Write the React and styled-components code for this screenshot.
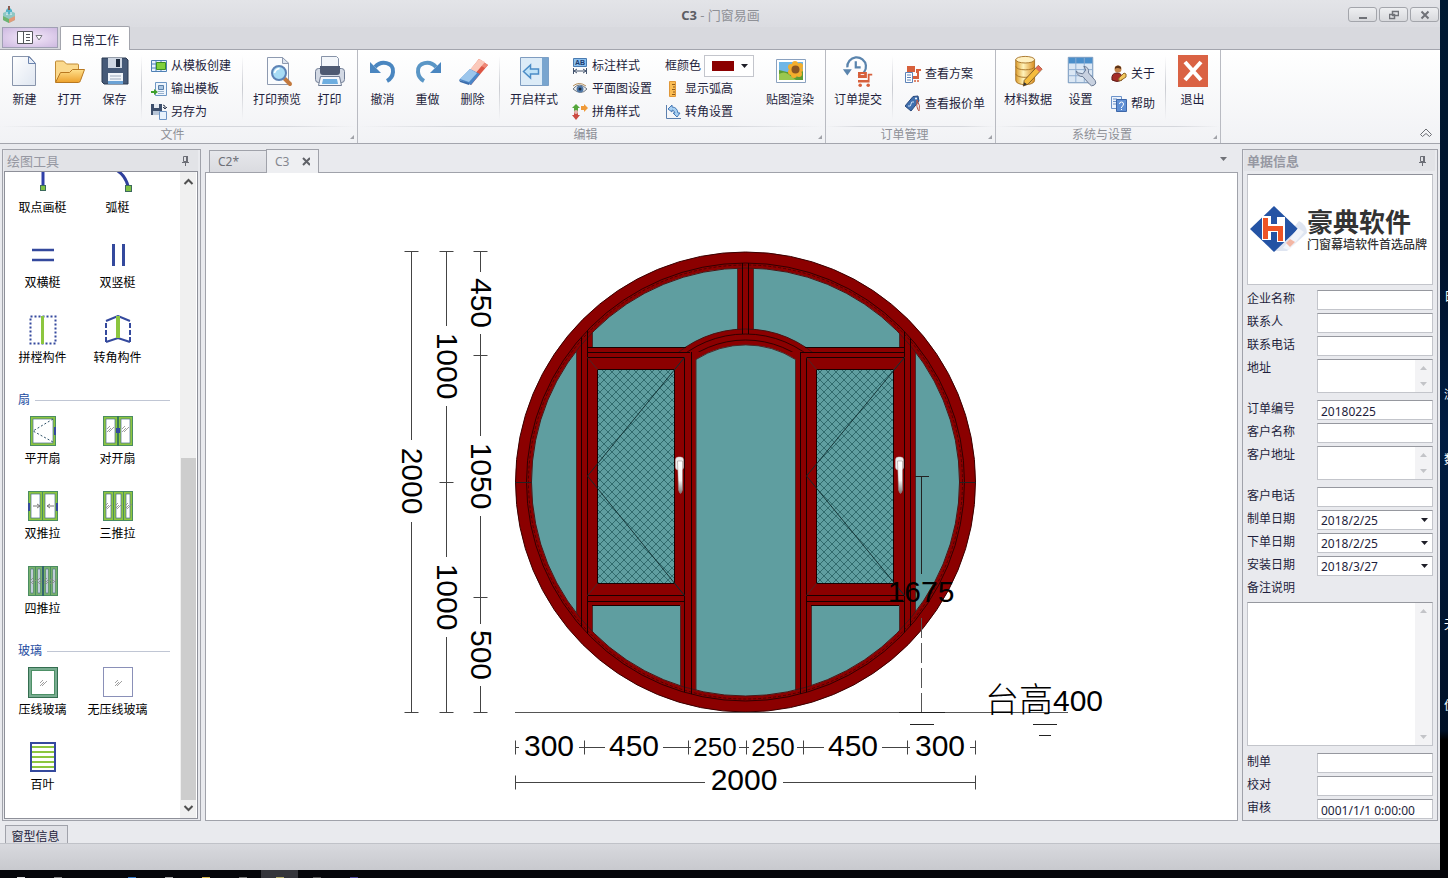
import { useState } from "react";
import styled, { createGlobalStyle } from "styled-components";

const GlobalStyle = createGlobalStyle`
    * {
        box-sizing:border-box;
    }

    body {
        margin:0;
        font-family:"Noto Sans", "Noto Sans CJK SC", sans-serif;
        font-size:12px;
        line-height:16px;
        color:#1e1e3c;
    }

    button, input, select, textarea {
        font:inherit;
        color:inherit;
        margin:0;
    }
`

/* ---------- ribbon icons, 32px ---------- */

const NewIcon = () => (
    <svg width="32" height="32" viewBox="0 0 32 32">
        <defs><linearGradient id="sheet" x1="0" y1="0" x2="1" y2="1"><stop offset="0" stopColor="#fff" /><stop offset="1" stopColor="#dfe6f1" /></linearGradient></defs>
        <path d="M3.500 1.500h17l6 7v22h-23z" fill="url(#sheet)" stroke="#8894ab" />
        <path d="M19.500 1.500v7h7z" fill="#e8eef8" stroke="#6c84ae" />
    </svg>
)

const OpenIcon = () => (
    <svg width="32" height="32" viewBox="0 0 32 32">
        <defs><linearGradient id="folder" x1="0" y1="0" x2="0" y2="1"><stop offset="0" stopColor="#ffe08c" /><stop offset="1" stopColor="#eda12c" /></linearGradient></defs>
        <path d="M1.500 27V7q0-1 1-1h7l3 3h11q1 0 1 1v6" fill="#fbd98d" stroke="#c08a35" />
        <path d="M1.500 27.500l5-10h9l3-3h12l-4 11q-.5 2-2 2z" fill="url(#folder)" stroke="#b87820" />
    </svg>
)

const SaveIcon = () => (
    <svg width="32" height="32" viewBox="0 0 32 32">
        <path d="M3 3h24l2 2v24H5l-2-2z" fill="#465a78" stroke="#2b3a52" />
        <path d="M9 3h14v10H9z" fill="#cfd7e3" />
        <path d="M17 4h4v8h-4z" fill="#1e2a3d" />
        <path d="M9 18h15v11H9z" fill="#f1f5fa" />
        <path d="M9 26h15v3H9z" fill="#6ba2d5" />
        <path d="M11 21h11M11 24h11" stroke="#9dabbd" />
    </svg>
)

const PreviewIcon = () => (
    <svg width="32" height="32" viewBox="0 0 32 32">
        <path d="M6.500 2.500h15l6 6v21h-21z" fill="#fafcfe" stroke="#8e9ab0" />
        <path d="M21.500 2.500v6h6.500z" fill="#dde5f0" stroke="#8e9ab0" />
        <path d="M24 24l5 5" stroke="#c3793e" strokeWidth="4" strokeLinecap="round" />
        <circle cx="18" cy="18" r="7" fill="#a8dcf5" stroke="#5d83b5" strokeWidth="2" />
        <path d="M13.500 18q1-4 5-4.500" stroke="#fff" strokeWidth="1.500" fill="none" />
    </svg>
)

const PrintIcon = () => (
    <svg width="32" height="32" viewBox="0 0 32 32">
        <path d="M7.500 1.500h15l2 2v11h-17z" fill="#f3f6fa" stroke="#8793a8" />
        <rect x="1.500" y="13.500" width="29" height="14" rx="3" fill="#d3d9e4" stroke="#707d95" />
        <path d="M6 11h20v6q0 3-3 3H9q-3 0-3-3z" fill="#4e5a72" />
        <path d="M6.500 21.500h19l2 9h-23z" fill="#f5f8fc" stroke="#707d95" />
        <path d="M9 24h14l1 5H8z" fill="#6eaee0" />
    </svg>
)

const UndoIcon = () => (
    <svg width="32" height="32" viewBox="0 0 32 32">
        <path d="M8 12C14 5 27 7 26 17q-.5 6-6 9" fill="none" stroke="#4a86c0" strokeWidth="4" />
        <path d="M3 7v11h11z" fill="#4a86c0" />
    </svg>
)

const RedoIcon = () => (
    <svg width="32" height="32" viewBox="0 0 32 32">
        <path d="M24 12C18 5 5 7 6 17q.5 6 6 9" fill="none" stroke="#5a96c6" strokeWidth="4" />
        <path d="M29 7v11H18z" fill="#4a86c0" />
    </svg>
)

const EraserIcon = () => (
    <svg width="32" height="32" viewBox="0 0 32 32">
        <path d="M22 4l9 6L14 30l-9-5z" fill="#dd5544" />
        <path d="M22 4l9 6-3 3-9-5z" fill="#ee8876" />
        <path d="M22 4l6 3-11 13-6-3z" fill="#fbc9bb" />
        <path d="M13 14l10 5-9 11-9-4-3-1z" fill="#4b86c8" />
        <path d="M13 14l7 4-8 9-9-3z" fill="#9cc6ec" />
        <path d="M2 25l10 3v2l-9-3z" fill="#3b6cab" />
    </svg>
)

const OpenStyleIcon = () => (
    <svg width="32" height="32" viewBox="0 0 32 32">
        <path d="M2.500 2.500h28v28h-28z" fill="#dcebf7" stroke="#7f9cc0" />
        <path d="M24 2.500h6.500v28H24z" fill="#79a5cf" />
        <path d="M5.500 16.500l7-6.500v4h8v5h-8v4z" fill="#bfe2f8" stroke="#4b8cc6" strokeWidth="1.500" />
    </svg>
)

const PictureIcon = () => (
    <svg width="32" height="32" viewBox="0 0 32 32">
        <path d="M2.500 4.500h29v23h-29z" fill="#fff" stroke="#8aa1bf" />
        <path d="M5 7h24v18H5z" fill="#6fb6e6" />
        <path d="M5 15l8 2 16-1v9H5z" fill="#5c9c35" />
        <path d="M5 19q5-3 9 0t8 6H5z" fill="#9ac74e" />
        <g fill="#f3ae2c">
            <circle cx="21" cy="9" r="3" /><circle cx="26" cy="11" r="3" /><circle cx="27" cy="15" r="2" /><circle cx="25" cy="19" r="3" />
            <circle cx="20" cy="20" r="3" /><circle cx="17" cy="17" r="3" /><circle cx="17" cy="12" r="3" />
        </g>
        <circle cx="21.500" cy="14.500" r="4" fill="#8a5522" />
    </svg>
)

const OrderIcon = () => (
    <svg width="34" height="36" viewBox="0 0 34 36">
        <path d="M5 14A10.500 10.500 0 1 1 17 23.500" fill="none" stroke="#5a84ad" strokeWidth="2.500" />
        <path d="M0 16h10l-5 7z" fill="#5a84ad" />
        <path d="M14.500 7v7H20" fill="none" stroke="#5a84ad" strokeWidth="2.500" />
        <path d="M17 19h10v7H17zM28 21h5v2h-3v8H17v-3h11z" fill="#d7603c" />
        <path d="M20 22h4" stroke="#fff" />
        <circle cx="19.500" cy="34" r="2" fill="#d7603c" /><circle cx="28.500" cy="34" r="2" fill="#d7603c" />
    </svg>
)

const MaterialIcon = () => (
    <svg width="32" height="34" viewBox="0 0 32 34">
        <defs><linearGradient id="gold"><stop offset="0" stopColor="#dc9c2c" /><stop offset=".4" stopColor="#fff3bb" /><stop offset="1" stopColor="#d98d1f" /></linearGradient></defs>
        <path d="M3 5v22c0 6 20 6 20 0V5z" fill="url(#gold)" stroke="#a8752a" />
        <ellipse cx="13" cy="5" rx="10" ry="3.500" fill="#fff0c0" stroke="#a8752a" />
        <path d="M3 12c0 5 20 5 20 0M3 20c0 5 20 5 20 0" fill="none" stroke="#a8752a" />
        <path d="M27 11l4 4-15 16-5 2 1-6z" fill="#f6bc3d" stroke="#7d5a26" />
        <path d="M27 11l4 4-3 3-4-4z" fill="#e06a5a" />
        <path d="M12 29l-1 4 4-2z" fill="#333" />
    </svg>
)

const SettingsIcon = () => (
    <svg width="32" height="34" viewBox="0 0 32 34">
        <path d="M2.500 2.500h26v27h-26z" fill="#dbe7f4" stroke="#6c8fb8" />
        <path d="M3 3h25v6H3z" fill="#4b8fcb" />
        <path d="M3 15.500h25M3 22h25M10.500 3v26M19.500 3v26" stroke="#8dacd0" />
        <path d="M11 17q1 6 7 6l7 8q2 3 5 1t1-5l-7-8q1-6-5-7l2 4-3 4-5-1z" fill="#c8d1e0" stroke="#64748f" />
    </svg>
)

const ExitIcon = () => (
    <svg width="32" height="32" viewBox="0 0 32 32">
        <path d="M1 0h30v32H1z" fill="#da6244" />
        <path d="M8 7l16 18M24 7L8 25" stroke="#fff" strokeWidth="4" />
    </svg>
)

/* ---------- ribbon icons, 16px ---------- */

const TemplateIcon = () => (
    <svg width="16" height="16" viewBox="0 0 16 16">
        <path d="M.5 2.500h15v11H.5z" fill="#e9f3ff" stroke="#4e80b5" />
        <path d="M0 6h16M0 10h16M5 2v12M10 2v12" stroke="#4e80b5" />
        <path d="M5.500 4.500h9v7h-9z" fill="#7fd03c" stroke="#3b8e22" />
    </svg>
)

const ExportIcon = () => (
    <svg width="16" height="16" viewBox="0 0 16 16">
        <path d="M4.500 1.500h11v13h-11z" fill="#eef5fd" stroke="#6e97c4" />
        <path d="M7.500 4.500h5v4h-5z" fill="#a9c5e2" stroke="#5a7fa8" /><path d="M7 10.500h6M7 12.500h6" stroke="#9ab2cd" />
        <path d="M0 10h3V8l4 3-4 3v-2H0z" fill="#3fa02b" />
    </svg>
)

const SaveAsIcon = () => (
    <svg width="16" height="16" viewBox="0 0 16 16">
        <path d="M0 0h11v11H0z" fill="#3d4f6c" /><path d="M3 0h5v4H3z" fill="#e6ebf2" /><path d="M2 7h7v4H2z" fill="#b8c6d8" />
        <path d="M12 1q3 0 2 4m-2-2l2 2 2-2" stroke="#333e55" fill="none" />
        <path d="M8.500 7.500h7v8h-7z" fill="#e8f2fc" stroke="#6d94c4" />
    </svg>
)

const LabelStyleIcon = () => (
    <svg width="16" height="16" viewBox="0 0 16 16">
        <path d="M1.500.5h13v8h-13z" fill="#8cc0ee" stroke="#4a7ab0" />
        <text x="3" y="7" fontSize="7" fontWeight="700" fill="#1c3d70" fontFamily="Liberation Sans, sans-serif">AB</text>
        <path d="M1.500 10v6M14.500 10v6M2 13h12M5 11l-3 2 3 2M11 11l3 2-3 2" stroke="#44546e" fill="none" />
    </svg>
)

const EyeIcon = () => (
    <svg width="16" height="16" viewBox="0 0 16 16">
        <path d="M1 8q6-8 14 0-6 7-14 0z" fill="#e9edf1" stroke="#707780" />
        <circle cx="8" cy="8" r="3.500" fill="#4e77a8" /><circle cx="8" cy="8" r="1.500" fill="#1c2a3c" />
        <path d="M1 5q6-5 13 0" stroke="#b18a55" fill="none" />
    </svg>
)

const JointIcon = () => (
    <svg width="16" height="16" viewBox="0 0 16 16">
        <path d="M4 0l4 4H6v4H2V4H0z" fill="#54a63a" />
        <path d="M9 2h3V0l4 4-4 4V6H9z" fill="#ef9a39" />
        <path d="M2 8h4v3h2l-4 5-4-5h2z" fill="#cc4a41" />
        <circle cx="4" cy="8" r="2" fill="#e6b4ae" />
    </svg>
)

const RulerIcon = () => (
    <svg width="16" height="16" viewBox="0 0 16 16">
        <path d="M4.500.5h6v15h-6z" fill="#fbbd53" stroke="#e0983a" />
        <path d="M7 3.500h3M8 6h2M7 8.500h3M8 11h2M7 13.500h3" stroke="#8f5a1b" />
    </svg>
)

const CornerIcon = () => (
    <svg width="16" height="16" viewBox="0 0 16 16">
        <path d="M1.500 1v13.500H16" stroke="#5b7fae" fill="none" />
        <path d="M3 5l4-4v2q5 0 6 6h2l-3 4-4-4h2q-1-3-3-3v2z" fill="#a8d0f2" stroke="#4679b6" />
    </svg>
)

const PlanIcon = () => (
    <svg width="16" height="18" viewBox="0 0 16 18">
        <path d="M2 1h8v6H2zM11 4h5v2h-2v8H8v-3h4V8h-1z" fill="#d7603c" />
        <circle cx="10" cy="16" r="1" fill="#d7603c" /><circle cx="13" cy="16" r="1" fill="#d7603c" />
        <path d="M.5 7.500h7v10h-7z" fill="#fff" stroke="#5d83b8" /><path d="M2 10h4M2 12.500h4M2 15h4" stroke="#5d83b8" />
    </svg>
)

const QuoteIcon = () => (
    <svg width="16" height="18" viewBox="0 0 16 18">
        <path d="M8 1.500l5-.5 1 5-8 10-6-5z" fill="#3f6fae" stroke="#29497c" />
        <circle cx="11" cy="3.500" r="1" fill="#fff" />
        <path d="M9 7q-3-1-3 2t-3 2" stroke="#cfe0f5" fill="none" />
        <path d="M12 5q4 6 2 11-3-3-2-11" stroke="#b85a4a" fill="none" />
    </svg>
)

const AboutIcon = () => (
    <svg width="16" height="18" viewBox="0 0 16 18">
        <circle cx="7" cy="4" r="3.500" fill="#c5854a" /><path d="M4 2q3-3 6 0v2Q6 2 4 4z" fill="#5d3317" />
        <path d="M1 15q-1-7 5-7 6 0 5 7-5 3-10 0z" fill="#a52c26" stroke="#5e1b18" />
        <path d="M9 16l6-4q1-4-2-4l-5 5q-1 3 1 3z" fill="#f3c65b" stroke="#8d682a" />
    </svg>
)

const HelpIcon = () => (
    <svg width="16" height="18" viewBox="0 0 16 18">
        <path d="M.5 1.500h10v12H.5z" fill="#edf3fc" stroke="#6d93ca" /><path d="M2 4h4M2 6.500h3M2 9h3" stroke="#6d93ca" />
        <path d="M5.500 4.500h10v12h-10z" fill="#5f8fd4" stroke="#3d66a8" />
        <path d="M8.500 9q0-2 2-2t2 2-2 3v1m0 1v1" stroke="#fff" fill="none" />
    </svg>
)

const CollapseIcon = () => (
    <svg width="14" height="10" viewBox="0 0 14 10">
        <path d="M1.500 6.500L7 1l5.500 5.500-2 2L7 5.500l-3.500 3z" fill="none" stroke="#6c6e74" />
    </svg>
)

const PinIcon = () => (
    <svg width="8" height="10" viewBox="0 0 8 10">
        <path d="M1.500.5h4v5h-4zM0 6.500h7M3.500 6v4" fill="none" stroke="#6c6e76" /><path d="M4 0h2v6H4z" fill="#6c6e76" />
    </svg>
)

const Arrow = ({ color = "#1e1e28", up = false }) => (
    <svg width="7" height="4" viewBox="0 0 7 4"><path d={up ? "M0 4h7L3.500 0z" : "M0 0h7L3.500 4z"} fill={color} /></svg>
)

/* ---------- tool box icons, 30px ---------- */

const Glint = ({ x, y }) => <path d={`M${x - 3} ${y + 3}l4-4M${x - 1} ${y + 3}l5-5M${x} ${y - 3}l-3 3`} stroke="#888" strokeWidth=".8" />

const Sash = ({ x, y, w, h, tone = "#8cc63f" }) => (
    <>
        <rect x={x + 1.5} y={y + 1.5} width={w - 3} height={h - 3} fill="#fff" stroke={tone} strokeWidth="3" />
        <rect x={x + 0.5} y={y + 0.5} width={w - 1} height={h - 1} fill="none" stroke="#4a8c62" />
        <rect x={x + 3} y={y + 3} width={w - 6} height={h - 6} fill="none" stroke="#4b6e93" strokeWidth=".7" />
    </>
)

const toolArt = {
    point: <><path d="M15 0v21" stroke="#2f3fa8" strokeWidth="3" /><rect x="12.500" y="20.500" width="5" height="5" fill="#7ec043" stroke="#3c6a5c" /></>,
    arc: <><path d="M6 2Q21 6 25 21" fill="none" stroke="#2f3f9c" strokeWidth="3" /><rect x="22.500" y="20.500" width="6" height="6" fill="#7ec043" stroke="#3c6a5c" /></>,
    horizontal: <path d="M4 10h22M4 20h22" stroke="#34499d" strokeWidth="2.500" />,
    vertical: <path d="M10.500 4v22M20.500 4v22" stroke="#34499d" strokeWidth="3" />,
    join: <><path d="M2.500 1.500h25v27h-25z" fill="none" stroke="#34499d" strokeWidth="2" strokeDasharray="2 2" /><path d="M14.500 1v28" stroke="#8cc63f" strokeWidth="3" /></>,
    corner: <><path d="M3 27V6M27 27V6" stroke="#34499d" strokeWidth="2" strokeDasharray="5 2" /><path d="M3 6l12-5 12 5M3 27l12-4 12 4" fill="none" stroke="#34499d" strokeWidth="2" /><path d="M15 1v22" stroke="#8cc63f" strokeWidth="4" /></>,
    casement: <><Sash x={2} y={0} w={26} h={30} /><path d="M25 3L5 15l20 11" fill="none" stroke="#2c5068" strokeDasharray="2 2" /><path d="M27 11v8" stroke="#34499d" strokeWidth="2" /></>,
    pair: <><Sash x={0} y={0} w={15} h={30} /><Sash x={15} y={0} w={15} h={30} /><Glint x={7} y={13} /><Glint x={22} y={13} /><path d="M15 0v30" stroke="#3a7a59" strokeWidth="2" /><path d="M15 12v5" stroke="#34499d" strokeWidth="4" /></>,
    slide2: <><Sash x={0} y={0} w={15} h={30} /><Sash x={14} y={0} w={16} h={30} /><path d="M5 15h7m-3-2l3 2-3 2M26 15h-7m3-2l-3 2 3 2" stroke="#777" fill="none" /><path d="M1 12v8M29 12v8" stroke="#34499d" strokeWidth="2" /></>,
    slide3: <><Sash x={0} y={0} w={11} h={30} /><Sash x={10} y={0} w={11} h={30} /><Sash x={20} y={0} w={10} h={30} /><Glint x={5} y={15} /><Glint x={15} y={15} /><Glint x={25} y={15} /></>,
    slide4: <><Sash x={0} y={0} w={8} h={30} tone="#77b06b" /><Sash x={7} y={0} w={8} h={30} tone="#77b06b" /><Sash x={15} y={0} w={8} h={30} tone="#77b06b" /><Sash x={22} y={0} w={8} h={30} tone="#77b06b" /><Glint x={5} y={15} /><Glint x={12} y={15} /><Glint x={19} y={15} /><Glint x={25} y={15} /><path d="M15 0v30" stroke="#33656f" strokeWidth="2" /></>,
    beadGlass: <><rect x="1.500" y="1.500" width="27" height="28" fill="#fff" stroke="#78ac90" strokeWidth="3" /><rect x=".5" y=".5" width="29" height="30" fill="none" stroke="#346d50" /><rect x="3.500" y="3.500" width="23" height="24" fill="none" stroke="#4d9066" /><Glint x={15} y={16} /></>,
    plainGlass: <><rect x=".5" y=".5" width="29" height="29" fill="#fff" stroke="#8a90b8" /><Glint x={15} y={16} /></>,
    louver: <><rect x="3" y="1" width="24" height="28" fill="#fff" stroke="#34499d" strokeWidth="2" /><path d="M4 5h22M4 10h22M4 15h22M4 20h22M4 25h22" stroke="#8cc63f" strokeWidth="2" /></>,
}

const toolGroups = [
    { title: "", tools: [["取点画梃", "point"], ["弧梃", "arc"], ["双横梃", "horizontal"], ["双竖梃", "vertical"], ["拼樘构件", "join"], ["转角构件", "corner"]] },
    { title: "扇", tools: [["平开扇", "casement"], ["对开扇", "pair"], ["双推拉", "slide2"], ["三推拉", "slide3"], ["四推拉", "slide4"]] },
    { title: "玻璃", tools: [["压线玻璃", "beadGlass"], ["无压线玻璃", "plainGlass"], ["百叶", "louver"]] },
]

/* ---------- ribbon ---------- */

const Big = ({ icon, label, wide }) => <BigButton type="button" $wide={wide}>{icon}<span>{label}</span></BigButton>
const Small = ({ icon, label, tall }) => <SmallButton type="button" $tall={tall}>{icon}{label}</SmallButton>

const Group = ({ title, children }) => (
    <GroupBox>
        <GroupBody>{children}</GroupBody>
        <GroupTitle>{title}<Corner /></GroupTitle>
    </GroupBox>
)

const Ribbon = () => (
    <RibbonBar>
        <Group title="文件">
            <Big icon={<NewIcon />} label="新建" />
            <Big icon={<OpenIcon />} label="打开" />
            <Big icon={<SaveIcon />} label="保存" />
            <Divider />
            <Column $width={92}>
                <Small icon={<TemplateIcon />} label="从模板创建" />
                <Small icon={<ExportIcon />} label="输出模板" />
                <Small icon={<SaveAsIcon />} label="另存为" />
            </Column>
            <Divider />
            <Big wide icon={<PreviewIcon />} label="打印预览" />
            <Big icon={<PrintIcon />} label="打印" />
        </Group>
        <Group title="编辑">
            <Big icon={<UndoIcon />} label="撤消" />
            <Big icon={<RedoIcon />} label="重做" />
            <Big icon={<EraserIcon />} label="删除" />
            <Divider />
            <Big wide icon={<OpenStyleIcon />} label="开启样式" />
            <Column $width={96} $inset>
                <Small icon={<LabelStyleIcon />} label="标注样式" />
                <Small icon={<EyeIcon />} label="平面图设置" />
                <Small icon={<JointIcon />} label="拼角样式" />
            </Column>
            <Column $width={100}>
                <ColorField>
                    <label htmlFor="frame-color">框颜色</label>
                    <ColorBox>
                        <select id="frame-color" defaultValue="#8b0000"><option value="#8b0000"></option></select>
                        <Swatch />
                        <Arrow />
                    </ColorBox>
                </ColorField>
                <Small icon={<RulerIcon />} label="显示弧高" />
                <Small icon={<CornerIcon />} label="转角设置" />
            </Column>
            <Big wide icon={<PictureIcon />} label="贴图渲染" />
        </Group>
        <Group title="订单管理">
            <Big wide icon={<OrderIcon />} label="订单提交" />
            <Divider />
            <Column $width={93} $inset>
                <Small tall icon={<PlanIcon />} label="查看方案" />
                <Small tall icon={<QuoteIcon />} label="查看报价单" />
            </Column>
        </Group>
        <Group title="系统与设置">
            <Big wide icon={<MaterialIcon />} label="材料数据" />
            <Big icon={<SettingsIcon />} label="设置" />
            <Column $width={58} $inset>
                <Small tall icon={<AboutIcon />} label="关于" />
                <Small tall icon={<HelpIcon />} label="帮助" />
            </Column>
            <Divider />
            <Big icon={<ExitIcon />} label="退出" />
        </Group>
        <Collapse type="button" aria-label="收起"><CollapseIcon /></Collapse>
    </RibbonBar>
)

/* ---------- drawing ---------- */

const VDim = ({ x, marks, labels }) => (
    <g>
        {marks.map((m) => <path key={m} d={`M${x - 7} ${m}h14`} />)}
        {labels.map(([text, mid, half], i) => (
            <g key={mid}>
                <path d={`M${x} ${marks[i]}V${mid - half}M${x} ${mid + half}V${marks[i + 1]}`} />
                <DimText transform={`translate(${x - 10} ${mid}) rotate(90)`} textAnchor="middle">{text}</DimText>
            </g>
        ))}
    </g>
)

const HDim = ({ y, base, marks, labels }) => (
    <g>
        {marks.map((m) => <path key={m} d={`M${m} ${y - 7}v14`} />)}
        {labels.map(([text, mid, half, small], i) => (
            <g key={mid}>
                <path d={`M${marks[i]} ${y}H${mid - half}M${mid + half} ${y}H${marks[i + 1]}`} />
                <DimText x={mid} y={base} $small={small} textAnchor="middle">{text}</DimText>
            </g>
        ))}
    </g>
)

const Leaf = ({ x, right, gl, gr }) => (
    <g>
        <path d={`M${x} 357.500H${right}V595.500H${x}z`} fill="#8b0000" stroke="#1a0000" />
        <path d={`M${gl} 369.500H${gr}V583.500H${gl}z`} fill="#5f9ea0" />
        <path d={`M${gl} 369.500H${gr}V583.500H${gl}z`} fill="url(#mesh)" stroke="#1a0000" />
        <path d={`M${x} 357.500L${gl} 369.500M${right} 357.500L${gr} 369.500M${x} 595.500L${gl} 583.500M${right} 595.500L${gr} 583.500`} stroke="#4d2525" />
        <path d={`M${right} 357.500L${x} 476L${right} 595.500`} fill="none" stroke="#0e2c2f" strokeWidth=".9" />
        <rect x={right - 9} y="457" width="8" height="13" rx="3" fill="#eee" stroke="#bbb" strokeWidth=".5" />
        <path d={`M${right - 7} 461h5v29q-2 7-4 0z`} fill="url(#lever)" stroke="#9a8080" strokeWidth=".5" />
    </g>
)

const Drawing = () => (
    <Sheet viewBox="206 173 1031 647" role="img" aria-label="C3">
        <defs>
            <pattern id="mesh" width="8" height="8" patternUnits="userSpaceOnUse">
                <path d="M0 0l8 8M8 0L0 8" stroke="#1d5458" strokeWidth=".7" />
            </pattern>
            <linearGradient id="lever" x1="0" y1="0" x2="0" y2="1"><stop offset="0" stopColor="#fff" /><stop offset=".6" stopColor="#f4f4f4" /><stop offset="1" stopColor="#777" /></linearGradient>
            <clipPath id="glassClip"><circle cx="745.500" cy="482" r="214" /></clipPath>
            <clipPath id="frameClip"><circle cx="745.500" cy="482" r="219" /></clipPath>
            <clipPath id="archClip"><path d="M600 300h290v52H600z" /></clipPath>
        </defs>
        <circle cx="745.500" cy="482" r="230" fill="#8b0000" stroke="#3a0000" />
        <g clipPath="url(#glassClip)" fill="#5f9ea0" stroke="#4a2a2a">
            <path d="M592.500 240H737.500V347.500H592.500zM753.500 240H899.500V347.500H753.500z" />
            <path d="M500 240H576.500V720H500zM915.500 240H990V720H915.500z" />
            <path d="M592.500 605.500H680.500V720H592.500zM811.500 605.500H899.500V720H811.500z" />
        </g>
        <g clipPath="url(#archClip)" fill="#8b0000" stroke="#4a1010">
            <circle cx="745.500" cy="437" r="108" />
            <g stroke="#1a0000" strokeWidth=".8"><circle cx="745.500" cy="437" r="103" /><circle cx="745.500" cy="437" r="97" /></g>
        </g>
        <path d="M696 720V359.500A92 92 0 0 1 795.500 359.500V720z" clipPath="url(#glassClip)" fill="#5f9ea0" stroke="#4a2a2a" />
        <circle cx="745.500" cy="482" r="214" fill="none" stroke="#4a1515" />
        <circle cx="745.500" cy="482" r="219" fill="none" stroke="#1a0000" strokeWidth=".8" />
        <circle cx="745.500" cy="482" r="217" fill="none" stroke="#3d0000" strokeDasharray="3 2" strokeWidth=".8" />
        <g clipPath="url(#frameClip)" fill="none" stroke="#1a0000">
            <path d="M581.500 250V720M587.500 250V720M904.500 250V720M910.500 250V720" />
            <path d="M742.500 250V334M748.500 250V334" />
            <path d="M684.500 357V720M691.500 352V720M800.500 352V720M806.500 357V720" />
            <path d="M587 347.500H686M805 347.500H904M587 352.500H690M801 352.500H904" />
            <path d="M587 601.500H684M806 601.500H904M592 605.500H680M811 605.500H899" />
        </g>
        <Leaf x={587.5} right={684.5} gl={597.5} gr={674.5} />
        <Leaf x={806.5} right={904.5} gl={816.5} gr={893.5} />
        <g stroke="#222" fill="none">
            <path d="M515 482.500h16M960 482.500h16" />
            <path d="M515 712.500H1068" stroke="#555" />
            <path d="M899 712.500h46M910 724.500h24M1033 724.500h24M1039 735.500h12" />
            <path d="M915 476.500h14M921.500 477V574" />
            <path d="M921.500 618V712" stroke="#555" strokeDasharray="20 5" />
        </g>
        <g stroke="#444" fill="none">
            <VDim x={411.5} marks={[251.5, 712.5]} labels={[["2000", 481, 41]]} />
            <VDim x={446.5} marks={[251.5, 482.5, 712.5]} labels={[["1000", 366, 40], ["1000", 597, 40]]} />
            <VDim x={480.5} marks={[251.5, 355.5, 597.5, 712.5]} labels={[["450", 303, 31], ["1050", 476, 40], ["500", 655, 31]]} />
            <HDim
                y={747.5}
                base={756}
                marks={[515.5, 584.5, 688.5, 746.5, 803.5, 907.5, 975.5]}
                labels={[["300", 549, 30], ["450", 634, 29], ["250", 715, 24, true], ["250", 773, 24, true], ["450", 853, 29], ["300", 940, 30]]}
            />
            <HDim y={782.5} base={790} marks={[515.5, 975.5]} labels={[["2000", 744, 39]]} />
        </g>
        <DimText x="921" y="602" textAnchor="middle">1675</DimText>
        <SillText x="985" y="712">台高</SillText>
        <DimText x="1053" y="711">400</DimText>
    </Sheet>
)

/* ---------- order form ---------- */

const Scroll = () => <MiniScroll><Arrow up color="#c3c4c8" /><Arrow color="#c3c4c8" /></MiniScroll>

const Field = ({ id, label, value, kind }) => (
    <Row>
        <label htmlFor={id}>{label}</label>
        {kind === "area" && <AreaBox><textarea id={id} /><Scroll /></AreaBox>}
        {kind === "date" && <SelectBox><select id={id} defaultValue={value}><option>{value}</option></select><Arrow /></SelectBox>}
        {!kind && <TextInput id={id} defaultValue={value} />}
    </Row>
)

const Logo = () => (
    <LogoBox>
        <svg width="58" height="50" viewBox="0 0 58 50">
            <path d="M25 46L50 16q8 4 8 12L38 46z" fill="#c9d3e8" opacity=".6" />
            <path d="M25 1l24 23-24 23L1 24z" fill="#2453a4" />
            <path d="M34 43l15-20 6 4-15 18z" fill="#f2f4f9" /><path d="M37 38l4-4 5 3-5 5z" fill="#f3b6a4" />
            <path d="M13 11h9v8h6v-7h8v25h-8V27h-6v8h-9z" fill="#fff" />
            <path d="M14 13h5v8h15v15h-5V26H19v8h-5z" fill="#ee5426" />
        </svg>
        <LogoText><strong>豪典软件</strong><span>门窗幕墙软件首选品牌</span></LogoText>
    </LogoBox>
)

const fieldsTop = [
    ["company", "企业名称"], ["contact", "联系人"], ["phone", "联系电话"], ["address", "地址", "", "area"],
    ["order", "订单编号", "20180225"], ["customer", "客户名称"], ["customer-address", "客户地址", "", "area"], ["customer-phone", "客户电话"],
    ["made", "制单日期", "2018/2/25", "date"], ["placed", "下单日期", "2018/2/25", "date"], ["install", "安装日期", "2018/3/27", "date"],
]
const fieldsBottom = [["maker", "制单"], ["checker", "校对"], ["auditor", "审核", "0001/1/1 0:00:00"]]

const desktopLabels = [["日", 289], ["浏", 387], ["数", 452], ["无", 617], ["优", 698]]
const taskItems = ["#ddd", "#888", "", "#3579c8", "#aaa", "#d8b74c", "#777", "#b5ad6c", "#555", "#4b459a"]

const App = () => {
    const [tab, setTab] = useState("C3")
    return (<Screen>
        <GlobalStyle />
        <Desktop>
            <Window>
                <TitleBar>
                    <svg width="14" height="18" viewBox="0 0 14 18">
                        <path d="M1 7l6-3 6 3v7l-6 3-6-3z" fill="#8fc7c4" /><path d="M1 10l6 3v4l-6-3z" fill="#6fb36f" /><path d="M13 10l-6 3v4l6-3z" fill="#e29a78" />
                        <path d="M4 4l3-3 3 3v4H4z" fill="#54b4c8" /><path d="M6 0h2v4H6z" fill="#8a5c50" /><path d="M5 6v3M9 6v3" stroke="#fff" />
                    </svg>
                    <Caption><b>C3</b> - 门窗易画</Caption>
                    <WindowButtons>
                        <button type="button" aria-label="最小化"><svg width="10" height="10"><path d="M1 8h8" stroke="#707278" strokeWidth="2" /></svg></button>
                        <button type="button" aria-label="还原"><svg width="10" height="10"><path d="M3.500 1.500h6v4h-6zM.5 4.500h5v4h-5z" fill="#e8e9ec" stroke="#707278" strokeWidth="1.500" /></svg></button>
                        <button type="button" aria-label="关闭"><svg width="10" height="10"><path d="M1.500 1.500l7 7M8.500 1.500l-7 7" stroke="#707278" strokeWidth="2" /></svg></button>
                    </WindowButtons>
                </TitleBar>
                <RibbonTabs>
                    <AppMenu type="button" aria-label="菜单">
                        <svg width="16" height="13" viewBox="0 0 16 13"><path d="M.5.5h15v12H.5zM6.500.5v12M9 3.500h4M9 6.500h4M9 9.500h4" fill="#fff" stroke="#55565c" /></svg>
                        <svg width="8" height="6" viewBox="0 0 8 6"><path d="M1 .5h6L4 5z" fill="#fff" stroke="#77787e" /></svg>
                    </AppMenu>
                    <RibbonTab type="button">日常工作</RibbonTab>
                </RibbonTabs>
                <Ribbon />
                <Workspace>
                    <Panel $width={199}>
                        <PanelTitle>绘图工具<PinIcon /></PanelTitle>
                        <ToolBox>
                            <ToolList>
                                {toolGroups.map(({ title, tools }) => (
                                    <div key={title}>
                                        {title && <ToolHeading>{title}</ToolHeading>}
                                        <ToolGrid>
                                            {tools.map(([name, art]) => (
                                                <Tool key={name} type="button">
                                                    <svg width="30" height="31" viewBox="0 0 30 31">{toolArt[art]}</svg>
                                                    {name}
                                                </Tool>
                                            ))}
                                        </ToolGrid>
                                    </div>
                                ))}
                            </ToolList>
                            <ToolScroll>
                                <svg width="15" height="16"><path d="M3.500 10l4-4 4 4" fill="none" stroke="#505050" strokeWidth="2" /></svg>
                                <ScrollTrack><ScrollThumb /></ScrollTrack>
                                <svg width="15" height="16"><path d="M3.500 6l4 4 4-4" fill="none" stroke="#505050" strokeWidth="2" /></svg>
                            </ToolScroll>
                        </ToolBox>
                    </Panel>
                    <Center>
                        <DocTabs>
                            <DocTab type="button" $active={tab === "C2"} onClick={() => setTab("C2")}>C2*</DocTab>
                            <DocTab type="button" $active={tab === "C3"} onClick={() => setTab("C3")}>
                                C3
                                {tab === "C3" && <svg width="9" height="9"><path d="M1 1l7 7M8 1L1 8" stroke="#606268" strokeWidth="2" /></svg>}
                            </DocTab>
                            <DocMenu type="button" aria-label="文档列表"><Arrow color="#707278" /></DocMenu>
                        </DocTabs>
                        <Canvas><Drawing /></Canvas>
                    </Center>
                    <Panel $width={196}>
                        <PanelTitle $bold>单据信息<PinIcon /></PanelTitle>
                        <Form>
                            <Logo />
                            {fieldsTop.map(([id, label, value, kind]) => <Field key={id} id={id} label={label} value={value} kind={kind} />)}
                            <label htmlFor="remark">备注说明</label>
                            <RemarkBox><textarea id="remark" /><Scroll /></RemarkBox>
                            {fieldsBottom.map(([id, label, value]) => <Field key={id} id={id} label={label} value={value} />)}
                        </Form>
                    </Panel>
                </Workspace>
                <Dock><DockTab type="button">窗型信息</DockTab></Dock>
                <StatusBar />
            </Window>
            <Wallpaper>
                {desktopLabels.map(([text, top]) => <DesktopLabel key={top} $top={top}>{text}</DesktopLabel>)}
            </Wallpaper>
        </Desktop>
        <Taskbar>
            {taskItems.map((color, i) => <TaskItem key={i} $active={i === 7} $color={color}><i /></TaskItem>)}
        </Taskbar>
    </Screen>)
}

const Screen = styled.div`
    display:flex;
    flex-direction:column;
    height:100vh;
    min-height:860px;
    overflow:hidden;
`

const Desktop = styled.div`
    flex:1;
    min-height:0;
    display:grid;
    grid-template-columns:minmax(0, 1fr) 8px;
`

const Window = styled.div`
    display:flex;
    flex-direction:column;
    min-height:0;
    background:#e9eaee;
`

const TitleBar = styled.header`
    height:27px;
    display:grid;
    grid-template-columns:1fr auto 1fr;
    align-items:center;
    padding:2px 1px 0 2px;
    background:linear-gradient(#e3e4e8, #dbdce1);
`

const Caption = styled.h1`
    margin:0;
    font-size:13px;
    font-weight:400;
    color:#8e9096;

    b {
        color:#5c5d63;
    }
`

const WindowButtons = styled.div`
    display:flex;
    justify-content:flex-end;
    gap:2px;

    button {
        width:29px;
        height:15px;
        padding:0;
        display:grid;
        place-items:center;
        border:1px solid #a3a5ab;
        border-radius:3px;
        background:linear-gradient(#eeeff1, #d8d9dd);
    }
`

const RibbonTabs = styled.div`
    display:flex;
    align-items:flex-end;
    gap:2px;
    height:23px;
    padding-left:2px;
    background:#d8d9de;
    border-bottom:1px solid #a3a5ad;
`

const AppMenu = styled.button`
    width:56px;
    height:21px;
    margin-bottom:1px;
    display:flex;
    align-items:center;
    justify-content:center;
    gap:2px;
    padding:0;
    border:1px solid #a0a0b4;
    background:radial-gradient(#f6eafb, #cdb9e0);
`

const RibbonTab = styled.button`
    height:24px;
    width:70px;
    margin-bottom:-1px;
    padding:4px 0 0;
    border:1px solid #a3a5ad;
    border-bottom:0;
    border-radius:2px 2px 0 0;
    background:#fff;
`

const RibbonBar = styled.div`
    display:flex;
    height:94px;
    flex:none;
    background:linear-gradient(#fff, #f1f2f5);
    border-bottom:1px solid #a3a5ad;
`

const GroupBox = styled.section`
    display:flex;
    flex-direction:column;
    border-right:1px solid #b9bbc2;
`

const GroupBody = styled.div`
    display:flex;
    height:76px;
    padding:0 5px 0 2px;
`

const GroupTitle = styled.div`
    position:relative;
    flex:1;
    text-align:center;
    color:#8e9097;
    padding:1px 12px 0 0;
    background:linear-gradient(90deg, transparent, #d5d7dc 20%, #d5d7dc 80%, transparent) top / 100% 1px no-repeat;
`

const Corner = styled.i`
    position:absolute;
    right:3px;
    bottom:4px;
    border:2px solid #a0a2a8;
    border-top-color:transparent;
    border-left-color:transparent;
`

const BigButton = styled.button`
    width:${({ $wide }) => ($wide ? 60 : 45)}px;
    padding:5px 0 0;
    display:flex;
    flex-direction:column;
    align-items:center;
    border:0;
    background:none;
    white-space:nowrap;

    svg {
        flex:none;
        height:32px;
    }

    span {
        margin-top:5px;
    }
`

const Divider = styled.i`
    width:1px;
    margin:6px 4px;
    background:linear-gradient(transparent, #c9cbd1, transparent);
`

const Column = styled.div`
    width:${({ $width }) => $width}px;
    display:flex;
    flex-direction:column;
    justify-content:center;
    padding:2px 0 0 ${({ $inset }) => ($inset ? 8 : 5)}px;
`

const SmallButton = styled.button`
    height:${({ $tall }) => ($tall ? 30 : 23)}px;
    display:flex;
    align-items:center;
    gap:4px;
    padding:0;
    border:0;
    background:none;
    white-space:nowrap;
`

const ColorField = styled.div`
    display:flex;
    align-items:center;
    gap:3px;
    height:23px;

    label {
        white-space:nowrap;
    }
`

const ColorBox = styled.div`
    position:relative;
    width:50px;
    height:22px;
    display:flex;
    align-items:center;
    gap:7px;
    padding-left:7px;
    background:#fff;
    border:1px solid #c3c5cc;

    select {
        position:absolute;
        inset:0;
        width:100%;
        height:100%;
        appearance:none;
        border:0;
        background:transparent;
    }

    svg {
        pointer-events:none;
    }
`

const Swatch = styled.i`
    width:22px;
    height:10px;
    background:#8b0000;
    pointer-events:none;
`

const Collapse = styled.button`
    margin:auto 7px 5px auto;
    padding:0;
    width:14px;
    border:0;
    background:none;
    line-height:0;
`

const Workspace = styled.main`
    flex:1;
    min-height:0;
    display:flex;
    gap:4px;
    padding:5px 2px 0;
`

const Panel = styled.aside`
    flex:none;
    width:${({ $width }) => $width}px;
    display:flex;
    flex-direction:column;
    padding:0 2px 1px 1px;
    border:1px solid #a0a2aa;
    background:#e9eaee;
`

const PanelTitle = styled.h2`
    margin:0;
    height:21px;
    flex:none;
    display:flex;
    align-items:center;
    justify-content:space-between;
    padding:0 8px 0 3px;
    font-size:13px;
    font-weight:${({ $bold }) => ($bold ? 700 : 400)};
    color:#9698a2;
    background:#e2e3e7;
`

const ToolBox = styled.div`
    flex:1;
    min-height:0;
    display:flex;
    overflow:hidden;
    background:#fff;
    border:1px solid #8e9099;
`

/* the list stands scrolled down by part of its first row */
const ToolList = styled.div`
    flex:1;
    margin-top:-17px;
    color:#000;
`

const ToolHeading = styled.h3`
    height:26px;
    margin:0;
    padding:14px 10px 0 13px;
    display:flex;
    align-items:center;
    gap:5px;
    font-size:12px;
    line-height:12px;
    font-weight:400;
    color:#1c4aa0;

    &::after {
        content:"";
        flex:1;
        height:1px;
        background:#c0c6d4;
    }
`

const ToolGrid = styled.div`
    display:grid;
    grid-template-columns:75px 75px;
`

const Tool = styled.button`
    height:75px;
    padding:10px 0 0;
    display:flex;
    flex-direction:column;
    align-items:center;
    gap:4px;
    border:0;
    background:none;
    white-space:nowrap;
`

const ToolScroll = styled.div`
    width:16px;
    margin-right:1px;
    display:flex;
    flex-direction:column;
    align-items:center;
    padding:2px 0;
    background:#f0f0f0;

    svg {
        flex:none;
    }
`

const ScrollTrack = styled.div`
    flex:1;
    width:15px;
    display:flex;
    align-items:flex-end;
`

const ScrollThumb = styled.div`
    width:100%;
    height:56%;
    background:#cdcdcd;
`

const Center = styled.section`
    flex:1;
    min-width:0;
    display:flex;
    flex-direction:column;
`

const DocTabs = styled.div`
    height:23px;
    flex:none;
    display:flex;
    align-items:flex-end;
    padding-left:4px;
`

const DocTab = styled.button`
    position:relative;
    height:${({ $active }) => ($active ? 24 : 22)}px;
    width:${({ $active }) => ($active ? 53 : 58)}px;
    margin-bottom:${({ $active }) => ($active ? -1 : 0)}px;
    display:flex;
    align-items:center;
    gap:13px;
    padding:0 8px;
    border:1px solid #a0a2aa;
    border-bottom:0;
    color:${({ $active }) => ($active ? "#85878f" : "#6e7078")};
    background:${({ $active }) => ($active ? "#eeeff2" : "linear-gradient(#e6e7eb, #dadbe0)")};

    & + & {
        margin-left:-1px;
    }
`

const DocMenu = styled.button`
    margin-left:auto;
    padding:0 11px 11px;
    border:0;
    background:none;
    line-height:0;
`

const Canvas = styled.div`
    flex:1;
    min-height:0;
    background:#fff;
    border:1px solid #a0a2aa;
`

const Sheet = styled.svg`
    display:block;
    width:100%;
    height:100%;
`

const DimText = styled.text`
    font-family:"Liberation Sans", sans-serif;
    font-size:${({ $small }) => ($small ? 26 : 30)}px;
    fill:#000;
    stroke:none;
`

const SillText = styled.text`
    font-family:"Noto Sans CJK SC", sans-serif;
    font-size:34px;
    font-weight:300;
    fill:#000;
`

const Form = styled.form`
    flex:1;
    min-height:0;
    display:flex;
    flex-direction:column;
    gap:3px;
    padding:3px 2px 0 3px;

    label {
        padding-top:1px;
    }
`

const LogoBox = styled.div`
    height:111px;
    flex:none;
    margin-bottom:2px;
    display:flex;
    align-items:center;
    padding-left:1px;
    background:#fff;
    border:1px solid #c3c5cb;
    border-top-color:#8e9099;
    overflow:hidden;
`

const LogoText = styled.div`
    display:flex;
    flex-direction:column;
    color:#333;
    white-space:nowrap;

    strong {
        font-size:26px;
        line-height:30px;
        font-weight:700;
    }

    span {
        font-weight:500;
    }
`

const Row = styled.div`
    display:grid;
    grid-template-columns:70px minmax(0, 1fr);
    align-items:start;
`

const TextInput = styled.input`
    width:100%;
    height:20px;
    padding:2px 3px 0;
    border:1px solid #c3c5cb;
    border-top-color:#96989f;
    background:#fff;
`

const SelectBox = styled.div`
    position:relative;
    height:20px;
    background:#fff;
    border:1px solid #c3c5cb;
    border-top-color:#96989f;

    select {
        width:100%;
        height:100%;
        padding:1px 3px 0;
        appearance:none;
        border:0;
        background:transparent;
    }

    svg {
        position:absolute;
        right:4px;
        top:7px;
        pointer-events:none;
    }
`

const AreaBox = styled.div`
    height:34px;
    margin-bottom:4px;
    display:flex;
    background:#fff;
    border:1px solid #c3c5cb;
    border-top-color:#96989f;

    textarea {
        flex:1;
        min-width:0;
        border:0;
        padding:2px 3px;
        resize:none;
        background:transparent;
        overflow:hidden;
    }
`

const RemarkBox = styled(AreaBox)`
    flex:1;
    height:auto;
    min-height:0;
    margin:3px 0 4px;
`

const MiniScroll = styled.div`
    width:17px;
    display:flex;
    flex-direction:column;
    align-items:center;
    justify-content:space-between;
    padding:6px 0;
    background:#f3f3f5;
`

const Dock = styled.div`
    height:23px;
    flex:none;
    display:flex;
    align-items:flex-end;
    padding-left:5px;
    border-bottom:1px solid #c0c2c8;
`

const DockTab = styled.button`
    height:18px;
    width:63px;
    padding:3px 2px 0 0;
    border:1px solid #a0a2aa;
    border-bottom:0;
    background:#e0e1e6;
    white-space:nowrap;
`

const StatusBar = styled.footer`
    height:26px;
    flex:none;
    background:linear-gradient(#d8d9de, #c8c9ce);
`

const Wallpaper = styled.div`
    position:relative;
    overflow:hidden;
    background:linear-gradient(#001a33 0, #00132c 30%, #001d42 50%, #001026 84%, #000 85%);
`

const DesktopLabel = styled.span`
    position:absolute;
    left:4px;
    top:${({ $top }) => $top}px;
    color:#fff;
`

const Taskbar = styled.footer`
    height:8px;
    flex:none;
    display:flex;
    padding-left:2px;
    background:#05060a;
`

const TaskItem = styled.div`
    width:37px;
    display:flex;
    align-items:flex-end;
    justify-content:center;
    background:${({ $active }) => ($active ? "#34353b" : "transparent")};

    i {
        width:8px;
        height:1px;
        background:${({ $color }) => $color || "transparent"};
    }
`

export default App
